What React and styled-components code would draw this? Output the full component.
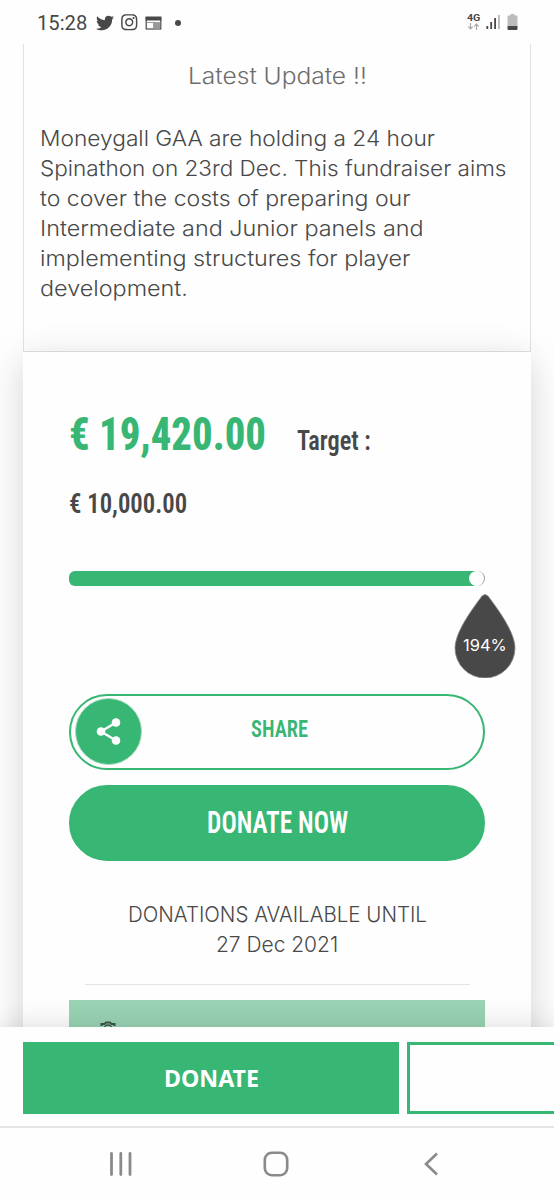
import {useLayoutEffect, useRef, useState} from 'react'
import styled, {createGlobalStyle} from 'styled-components'
import {FaTwitter, FaInstagram} from 'react-icons/fa'

const green = '#38b673'
const dark = '#484848'

const GlobalStyle = createGlobalStyle`
  * {
    box-sizing: border-box;
  }
  body {
    margin: 0;
    background: #fefefe;
    font-family: Inter, 'Open Sans', sans-serif;
    color: ${dark};
  }
`

const Screen = styled.div`
  width: 554px;
  height: 1200px;
  display: flex;
  flex-direction: column;
  overflow: hidden;
`

const StatusBar = styled.header`
  flex: none;
  height: 44px;
  padding: 1px 36px 0 37px;
  display: flex;
  align-items: center;
`
const Time = styled.div`
  width: 59px;
  font: 400 20px/24px Roboto, sans-serif;
`
const StatusIcons = styled.div`
  display: flex;
  align-items: center;
  gap: 6px;
  svg {
    display: block;
  }
`
const Dot = styled.i`
  width: 6px;
  height: 6px;
  margin-left: 7px;
  border-radius: 50%;
  background: ${dark};
`
const Network = styled.div`
  margin-left: auto;
  display: flex;
  gap: 6px;
`
const NetworkType = styled.div`
  width: 13px;
  font: 700 9px/9px Roboto, sans-serif;
  svg {
    display: block;
  }
`

const Page = styled.main`
  flex: none;
  height: 983px;
  padding: 0 23px;
  overflow: hidden;
`
const Update = styled.section`
  height: 308px;
  padding: 17px 16px 0;
  border: solid #e2e2e2;
  border-width: 0 1px 1px;
`
const UpdateTitle = styled.h2`
  margin: 0 0 33px;
  display: flex;
  justify-content: center;
  font-weight: 300;
  font-size: 22.5px;
  line-height: 29px;
  color: #6d6d6d;
`
const UpdateText = styled.div`
  font-weight: 300;
  font-size: 21.8px;
  line-height: 30.1px;
`

const Card = styled.section`
  position: relative;
  height: 720px;
  padding: 52px 46px 0;
  background: #fefefe;
  box-shadow: 0 8px 34px rgba(0, 0, 0, 0.17);
`
const Totals = styled.div`
  display: flex;
  flex-wrap: wrap;
  align-items: baseline;
  column-gap: 31px;
  row-gap: 20px;
  font-family: Roboto, sans-serif;
  font-stretch: 75%;
`
const Raised = styled.div`
  font-weight: 800;
  font-size: 47px;
  line-height: 60px;
  color: ${green};
`
const Target = styled.div`
  font-weight: 600;
  font-size: 27.3px;
  line-height: 40px;
`

const Progress = styled.div`
  position: relative;
  height: 15px;
  margin-top: 47px;
  border-radius: 6px;
  background: ${green};
`
const Thumb = styled.i`
  position: absolute;
  top: 0;
  right: 0;
  width: 16px;
  height: 15px;
  background: #fefefe;
  border-radius: 8px 0 0 8px;
  &::after {
    content: '';
    display: block;
    height: 15px;
    border-right: 1px solid #8f9d96;
    border-radius: 8px;
  }
`
const Drop = styled.div`
  position: absolute;
  top: 23px;
  right: -31px;
  width: 62px;
  height: 84px;
  svg {
    position: absolute;
    inset: 0;
  }
`
const Percent = styled.div`
  position: absolute;
  top: 41px;
  left: 9px;
  font-weight: 400;
  font-size: 16.5px;
  line-height: 20px;
  color: #fff;
`

const Pill = styled.button`
  position: relative;
  display: flex;
  align-items: center;
  justify-content: center;
  width: 100%;
  height: 76px;
  padding: 0 0 1px;
  border: 2px solid ${green};
  border-radius: 38px;
  background: ${({$filled}) => $filled ? green : '#fefefe'};
  color: ${({$filled}) => $filled ? '#fff' : green};
  font-family: Roboto, sans-serif;
  font-stretch: 75%;
  font-weight: 600;
  font-size: ${({$filled}) => $filled ? 31 : 24.7}px;
  line-height: 36px;
`
const ShareButton = styled(Pill)`
  margin: 108px 0 15px;
  padding: 0 0 7px 4px;
`
const ShareBadge = styled.span`
  position: absolute;
  top: 2px;
  left: 4px;
  width: 67px;
  height: 67px;
  border: 1px solid #a5dcbf;
  border-radius: 50%;
  background: ${green};
  svg {
    display: block;
  }
`

const Until = styled.div`
  margin-top: 38px;
  display: flex;
  flex-direction: column;
  align-items: center;
  font-weight: 300;
  font-size: 21.8px;
  line-height: 30px;
`
const Divider = styled.hr`
  height: 1px;
  margin: 25px 15px 15px 16px;
  border: 0;
  background: #e4e4e4;
`
const Panel = styled.div`
  height: 60px;
  padding: 21px 31px;
  background: #9ad3b5;
  svg {
    display: block;
  }
`

const Actions = styled.footer`
  position: relative;
  flex: none;
  height: 99px;
  padding: 15px 0 12px 23px;
  display: flex;
  gap: 8px;
  background: #fefefe;
  box-shadow: 0 0 28px rgba(0, 0, 0, 0.15);
`
const Action = styled.button`
  flex: none;
  width: 376px;
  height: 72px;
  padding: 0 0 1px 1px;
  display: flex;
  align-items: center;
  justify-content: center;
  border: 3px solid ${green};
  background: ${({$outlined}) => $outlined ? '#fefefe' : green};
  font: 700 23.7px/32px 'Noto Sans', 'Open Sans', sans-serif;
  color: #fff;
`

const NavBar = styled.nav`
  position: relative;
  flex: 1;
  padding-left: 109px;
  display: flex;
  align-items: center;
  border-top: 2px solid #e6e6e6;
  background: #fefefe;
  svg {
    flex: none;
  }
  svg:nth-child(2) {
    margin: 0 135px 0 129.5px;
  }
`

const FitBox = styled.span`
  display: block;
  width: ${({$width}) => $width}px;
  white-space: nowrap;
`
const FitText = styled.span`
  display: inline-block;
  transform-origin: 0 50%;
`

// Stretches or narrows one line of text so that it fills the given width
const Fit = ({width, children}) => {
  const ref = useRef(null)
  const [scale, setScale] = useState(1)

  useLayoutEffect(() => {
    setScale(width / ref.current.offsetWidth)
  }, [width, children])

  return (
    <FitBox $width={width}>
      <FitText ref={ref} style={{transform: `scaleX(${scale})`}}>{children}</FitText>
    </FitBox>
  )
}

const NewsIcon = () => (
  <svg width="17" height="16" viewBox="0 0 17 16">
    <rect x="1.2" y="3" width="14.6" height="11" fill="none" stroke={dark} strokeWidth="1.2"/>
    <path d="M.6 1.5h15.8v4H.6z" fill={dark}/>
    <path d="M9 8h6v5.500H9z" fill="#999"/>
    <path d="M1.500 7.500h13.500M8.500 7.500v6" fill="none" stroke="#888" strokeWidth=".8"/>
  </svg>
)

const SignalIcon = () => (
  <svg width="15" height="16" viewBox="0 0 15 16">
    <path d="M1.300 12v3M5.200 8v7M9.100 4v11" stroke={dark} strokeWidth="1.800"/>
    <path d="M13 1v14" stroke="#b9b9b9" strokeWidth="1.800"/>
  </svg>
)

const BatteryIcon = () => (
  <svg width="11" height="17" viewBox="0 0 11 17">
    <path d="M3.500 0h4v1.500h2q1 0 1 1V12H.5V2.500q0-1 1-1h2z" fill="#bcbcbc"/>
    <path d="M.5 12h10v3q0 1-1 1h-8q-1 0-1-1z" fill={dark}/>
  </svg>
)

const lines = [
  ['Moneygall GAA are holding a 24 hour', 395],
  ['Spinathon on 23rd Dec. This fundraiser aims', 467],
  ['to cover the costs of preparing our', 370],
  ['Intermediate and Junior panels and', 384],
  ['implementing structures for player', 370],
  ['development.', 148],
]

const App = () => {
  return (
    <Screen>
      <GlobalStyle/>
      <StatusBar>
        <Time><Fit width={50.5}>15:28</Fit></Time>
        <StatusIcons>
          <FaTwitter size={18} color={dark}/>
          <FaInstagram size={18.500} color={dark}/>
          <NewsIcon/>
          <Dot/>
        </StatusIcons>
        <Network>
          <NetworkType>
            <Fit width={13}>4G</Fit>
            <svg width="13" height="7" viewBox="0 0 13 7">
              <path d="M3.500 0v6M1.200 3.700l2.300 2.300 2.300-2.300M9.500 7V1M7.200 3.300L9.500 1l2.300 2.300" fill="none" stroke="#aaa" strokeWidth="1.200"/>
            </svg>
          </NetworkType>
          <SignalIcon/>
          <BatteryIcon/>
        </Network>
      </StatusBar>

      <Page>
        <Update>
          <UpdateTitle><Fit width={179}>Latest Update !!</Fit></UpdateTitle>
          <UpdateText>
            {lines.map(([text, width]) => <Fit key={text} width={width}>{text}</Fit>)}
          </UpdateText>
        </Update>

        <Card>
          <Totals>
            <Raised><Fit width={197}>€ 19,420.00</Fit></Raised>
            <Target><Fit width={74}>Target :</Fit></Target>
            <Target><Fit width={118}>€ 10,000.00</Fit></Target>
          </Totals>
          <Progress>
            <Thumb/>
            <Drop>
              <svg width="62" height="84" viewBox="0 0 62 84">
                <path d="M28 2Q31-1 34 2C43 14 61 38 61 54A30 30 0 0 1 1 54C1 38 19 14 28 2Z" fill={dark} stroke="#8a8a8a" strokeWidth=".8"/>
              </svg>
              <Percent><Fit width={44}>194%</Fit></Percent>
            </Drop>
          </Progress>
          <ShareButton>
            <ShareBadge>
              <svg width="65" height="65" viewBox="0 0 65 65">
                <path d="M40 23.500L25 32.500l15 9" fill="none" stroke="#fff" strokeWidth="2.400"/>
                <circle cx="40" cy="23.500" r="4.300" fill="#fff"/>
                <circle cx="25" cy="32.500" r="4.300" fill="#fff"/>
                <circle cx="40" cy="41.500" r="4.300" fill="#fff"/>
              </svg>
            </ShareBadge>
            <Fit width={57}>SHARE</Fit>
          </ShareButton>
          <Pill $filled><Fit width={141}>DONATE NOW</Fit></Pill>
          <Until>
            <Fit width={299}>DONATIONS AVAILABLE UNTIL</Fit>
            <Fit width={122}>27 Dec 2021</Fit>
          </Until>
          <Divider/>
          <Panel>
            <svg width="16" height="16" viewBox="0 0 16 16">
              <path d="M1.500 5V3h3L6 1.500h4L11.500 3h3v2" fill="none" stroke="#3d5749" strokeWidth="2"/>
              <circle cx="8" cy="8" r="4" fill="none" stroke="#3d5749" strokeWidth="1.500"/>
            </svg>
          </Panel>
        </Card>
      </Page>

      <Actions>
        <Action><Fit width={95}>DONATE</Fit></Action>
        <Action $outlined/>
      </Actions>
      <NavBar>
        <svg width="24" height="24" viewBox="0 0 24 24">
          <path d="M2.500 1.500v21M11.800 1.500v21M21 1.500v21" stroke="#8a8a8a" strokeWidth="2.800" strokeLinecap="round"/>
        </svg>
        <svg width="26" height="26" viewBox="0 0 26 26">
          <rect x="1.800" y="1.800" width="22.400" height="22.400" rx="7" fill="none" stroke="#8a8a8a" strokeWidth="2.600"/>
        </svg>
        <svg width="15" height="24" viewBox="0 0 15 24">
          <path d="M13 1.500L2 12l11 10.500" fill="none" stroke="#8a8a8a" strokeWidth="2.600"/>
        </svg>
      </NavBar>
    </Screen>
  )
}

export default App
